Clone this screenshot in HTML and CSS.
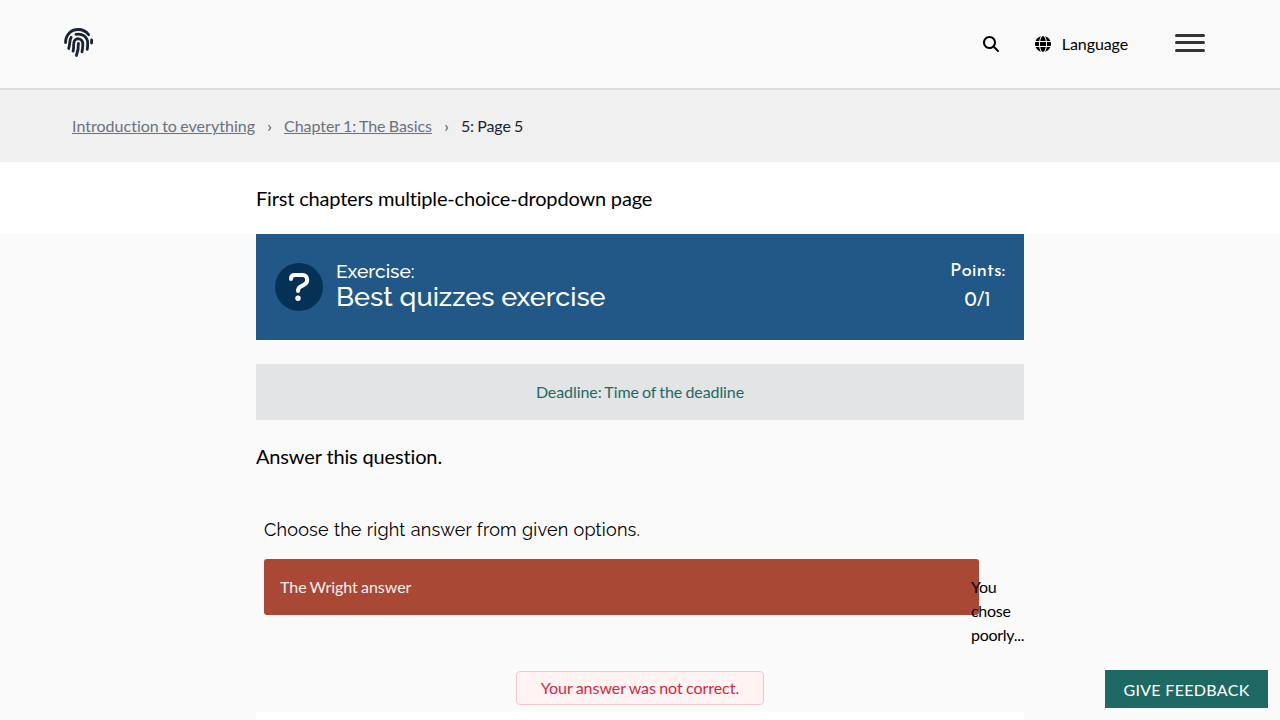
FILE: index.html
```html
<!DOCTYPE html>
<html lang="en">
<head>
<meta charset="utf-8">
<title>Page 5</title>
<link rel="stylesheet" href="styles.css">
</head>
<body>
<header class="topbar">
  <a class="logo" aria-label="Home"><svg width="30" height="30" viewBox="0 0 30 30" fill="none" stroke="#1a2333" stroke-width="2.8" stroke-linecap="round">
    <path d="M1.6 14.6C1.4 7 7 1.5 14 1.5c4.4 0 8.3 1.900 10.700 5.200"/>
    <path d="M27.600 12v3"/>
    <path d="M12 6.300c6.300-1.200 11.700 2.400 11.700 9 0 2.200 0 4.200-.5 6"/>
    <path d="M7.200 9.400c-1.900 2.600-1 6.300-2.500 11.100"/>
    <path d="M9.100 23.200c1.200-5.300-.2-7.900 1.400-10.500 2.400-3.600 8.300-1.900 8.300 3 0 2.800-.1 5.200-.8 8.200"/>
    <path d="M14.400 15.300c.2 4.600-.6 8.500-2 12.200"/>
  </svg></a>
  <nav class="actions">
    <svg class="search" width="16" height="16" viewBox="0 0 512 512"><path d="M416 208c0 45.900-14.900 88.300-40 122.700L502.600 457.400c12.500 12.500 12.500 32.800 0 45.300s-32.800 12.500-45.300 0L330.700 376c-34.400 25.200-76.800 40-122.700 40C93.100 416 0 322.900 0 208S93.100 0 208 0S416 93.100 416 208zM208 352a144 144 0 1 0 0-288 144 144 0 1 0 0 288z"/></svg>
    <span class="language"><svg width="16" height="16" viewBox="0 0 512 512"><path d="M352 256c0 22.200-1.200 43.600-3.300 64H163.300c-2.200-20.400-3.300-41.800-3.300-64s1.200-43.600 3.300-64H348.700c2.200 20.400 3.300 41.800 3.300 64zm28.800-64H503.900c5.300 20.500 8.100 41.900 8.100 64s-2.800 43.500-8.100 64H380.800c2.100-20.600 3.200-42 3.200-64s-1.100-43.400-3.200-64zm112.600-32H376.700c-10-63.900-29.800-117.400-55.300-151.600c78.300 20.700 142 77.500 171.900 151.600zm-149.100 0H167.700c6.100-36.400 15.500-68.600 27-94.700c10.500-23.600 22.200-40.700 33.500-51.500C239.400 3.200 248.700 0 256 0s16.600 3.200 27.800 13.800c11.300 10.800 23 27.900 33.500 51.500c11.600 26 20.900 58.200 27 94.700zm-209 0H18.600C48.600 85.900 112.200 29.100 190.600 8.400C165.100 42.600 145.300 96.100 135.300 160zM8.100 192H131.200c-2.100 20.600-3.200 42-3.200 64s1.100 43.400 3.200 64H8.100C2.800 299.500 0 278.100 0 256s2.800-43.500 8.100-64zM194.700 446.600c-11.600-26-20.900-58.200-27-94.600H344.300c-6.100 36.400-15.500 68.600-27 94.600c-10.500 23.600-22.200 40.700-33.500 51.500C272.600 508.800 263.300 512 256 512s-16.600-3.200-27.800-13.800c-11.300-10.800-23-27.900-33.500-51.500zM135.300 352c10 63.900 29.800 117.400 55.300 151.600C112.200 482.900 48.600 426.100 18.600 352H135.300zm358.100 0c-30 74.100-93.600 130.900-171.900 151.600c25.500-34.200 45.200-87.700 55.300-151.600H493.400z"/></svg>Language</span>
    <span class="menu"><i></i><i></i><i></i></span>
  </nav>
</header>
<nav class="breadcrumbs">
  <a>Introduction to everything</a><span class="sep">›</span><a>Chapter 1: The Basics</a><span class="sep">›</span><span class="current">5: Page 5</span>
</nav>
<section class="intro"><p class="column lead">First chapters multiple-choice-dropdown page</p></section>
<main class="column">
  <header class="exercise">
    <svg width="48" height="48" viewBox="0 0 48 48"><circle cx="24" cy="24" r="24" fill="#063157"/><path d="M16 16.100v-.3c0-2.300 1.500-3.800 3.800-3.800h7.700c3 0 4.700 2.200 4.700 4.900 0 2.300-1.100 3.700-3.200 4.900l-3.600 2c-1.600.9-2.400 2-2.400 4.100" fill="none" stroke="#fff" stroke-width="4" stroke-linecap="round"/><circle cx="23" cy="35.300" r="2.700" fill="#fff"/></svg>
    <h1 class="title"><span class="kind">Exercise:</span><span class="name">Best quizzes exercise</span></h1>
    <div class="points"><span class="points-label">Points:</span><span class="points-value">0/1</span></div>
  </header>
  <div class="deadline">Deadline: Time of the deadline</div>
  <p class="lead question">Answer this question.</p>
  <div class="quiz">
    <h2 class="prompt">Choose the right answer from given options.</h2>
    <div class="answer">
      <div class="choice">The Wright answer</div>
      <div class="comment">You chose poorly...</div>
    </div>
  </div>
  <div class="result">Your answer was not correct.</div>
  <div class="panel"></div>
</main>
<button class="feedback">GIVE FEEDBACK</button>
</body>
</html>
```
FILE: styles.css
```css
* { box-sizing: border-box; }
body { margin: 0; height: 720px; overflow: hidden; background: #fafafa; color: #000; font: 16px/24px Lato, sans-serif; font-variant-ligatures: none; word-spacing: -.8px; }
h1, h2, p { margin: 0; font-weight: 400; }
svg { display: block; flex: none; }
.topbar { display: flex; justify-content: space-between; height: 90px; padding: 28px 75px 0 64px; background: #f9f9f9; border-bottom: 2px solid #dcdcdc; }
.actions { display: flex; align-items: flex-start; }
.search { margin: 8px 36px 0 0; }
.language { display: flex; align-items: center; gap: 11px; height: 32px; margin-right: 47px; letter-spacing: -.1px; }
.menu { display: flex; flex-direction: column; width: 30px; padding-top: 6px; }
.menu i { height: 3px; margin-bottom: 4px; border-radius: 2px; background: #333; }
.menu i + i { margin-bottom: 5px; }
.breadcrumbs { display: flex; height: 72px; padding: 24px 72px; background: #f0f0f0; color: #1a2333; }
.breadcrumbs a { color: #6b717c; text-decoration: underline; letter-spacing: .02px; }
.breadcrumbs .sep ~ a { letter-spacing: -.05px; }
.breadcrumbs .current { letter-spacing: -.1px; }
.sep { width: 29px; text-align: center; color: #44505c; }
.intro { height: 72px; padding-top: 18px; background: #fff; }
.column { width: 768px; margin: 0 auto; }
.lead { font-size: 20px; line-height: 36px; letter-spacing: -.18px; word-spacing: 0; }
.exercise { display: flex; align-items: center; height: 106px; padding: 0 19px; background: #215887; color: #fff; word-spacing: 0; }
.title { display: flex; flex-direction: column; flex: 1; margin: -6px 0 0 13px; font-family: Raleway, Lato, sans-serif; font-weight: 500; }
.kind { font-size: 19.2px; line-height: 24px; }
.name { font-size: 27px; line-height: 27px; }
.points { display: flex; flex-direction: column; align-items: center; font: 19px/28px "Josefin Sans", Lato, sans-serif; }
.points-value { font-size: 19.500px; line-height: 30px; }
.deadline { margin-top: 24px; height: 56px; padding: 16px; background: #e2e4e6; color: #1f6964; text-align: center; letter-spacing: -.08px; }
.question { margin-top: 18px; letter-spacing: -.15px; }
.quiz { margin-top: 37px; padding: 0 0 0 8px; }
.prompt { font: 400 18px/38px Raleway, Lato, sans-serif; letter-spacing: .2px; word-spacing: .4px; }
.answer { display: flex; align-items: flex-start; margin-top: 10px; height: 112px; }
.choice { flex: none; width: 715px; height: 56px; padding: 16px; border-radius: 3px; background: #a84835; color: #f8f0ee; letter-spacing: -.04px; }
.comment { width: 53px; margin-left: -8px; padding-top: 16px; letter-spacing: -.28px; }
.result { width: 248px; height: 34px; margin: 0 auto; border: 1px solid #f3c5cb; border-radius: 4px; background: #fff3f4; color: #d4263f; line-height: 32px; text-align: center; letter-spacing: -.03px; }
.panel { height: 8px; margin-top: 7px; background: #fff; }
.feedback { position: fixed; right: 12px; bottom: 12px; width: 163px; height: 38px; padding: 2px 0 0; border: 0; background: #1f6964; color: #fff; font: 16px/24px Lato, sans-serif; letter-spacing: .32px; }
```
